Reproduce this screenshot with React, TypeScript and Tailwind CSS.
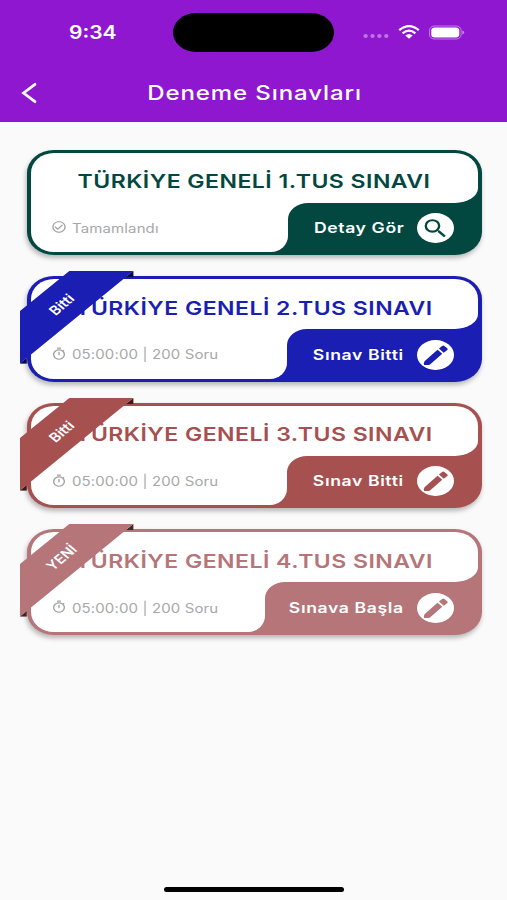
import { MdCheckCircleOutline, MdOutlineTimer, MdSearch } from "react-icons/md";

interface Exam {
  id: number;
  title: string;
  status: string;
  done?: boolean;
  action: string;
  ribbon?: string;
  bg: string;
  text: string;
  tabWidth: string;
}

const exams: Exam[] = [
  {
    id: 1,
    title: "TÜRKİYE GENELİ 1.TUS SINAVI",
    status: "Tamamlandı",
    done: true,
    action: "Detay Gör",
    bg: "bg-[#024840]",
    text: "text-[#024840]",
    tabWidth: "w-[190px]",
  },
  {
    id: 2,
    title: "TÜRKİYE GENELİ 2.TUS SINAVI",
    status: "05:00:00 | 200 Soru",
    action: "Sınav Bitti",
    ribbon: "Bitti",
    bg: "bg-[#1a1eb3]",
    text: "text-[#1a1eb3]",
    tabWidth: "w-[191px]",
  },
  {
    id: 3,
    title: "TÜRKİYE GENELİ 3.TUS SINAVI",
    status: "05:00:00 | 200 Soru",
    action: "Sınav Bitti",
    ribbon: "Bitti",
    bg: "bg-[#a65050]",
    text: "text-[#a65050]",
    tabWidth: "w-[191px]",
  },
  {
    id: 4,
    title: "TÜRKİYE GENELİ 4.TUS SINAVI",
    status: "05:00:00 | 200 Soru",
    action: "Sınava Başla",
    ribbon: "YENİ",
    bg: "bg-[#b57579]",
    text: "text-[#b57579]",
    tabWidth: "w-[213px]",
  },
];

function Ribbon({ label, color }: { label: string; color: string }) {
  return (
    <div className={`absolute -left-[6.7px] -top-[5.3px] h-[93px] w-[114px] ${color}`}>
      <svg viewBox="0 0 114 93" className="h-full w-full">
        <path d="M106 6 L113.3 0 V6 Z M0 92.5 L6.7 87 V92.5 Z" fill="currentColor" />
        <path d="M106 6 L113.3 0 V6 Z M0 92.5 L6.7 87 V92.5 Z" fill="#000" fillOpacity="0.65" />
        <path d="M49.3 0 H113.3 L0 92.5 V40 Z" fill="currentColor" />
      </svg>
      <span className="absolute left-[12px] top-[24px] w-[60px] text-center text-[12.7px] font-semibold leading-[20px] text-white [transform:scaleX(1.2)_rotate(-45deg)]">
        {label}
      </span>
    </div>
  );
}

function PencilIcon() {
  return (
    <svg viewBox="0 0 36 30" className="h-full w-full">
      <path d="M20.3 9.8 L25 13.8 L13 24.2 Q11.9 25.1 10.4 25.1 H8 Q6.5 25.1 6.6 23.9 L6.7 22.8 Q6.8 21.6 7.8 20.8 Z" fill="currentColor" />
      <path d="M21.7 8.6 L24.9 5.9 Q26 5 27.1 5.9 L30 8.3 Q31 9.2 30 10.1 L26.5 12.8 Z" fill="currentColor" />
    </svg>
  );
}

function ExamCard({ exam }: { exam: Exam }) {
  const StatusIcon = exam.done ? MdCheckCircleOutline : MdOutlineTimer;

  return (
    <div
      className={`relative flex h-[105.6px] flex-col rounded-[27px/23px] px-[4px] py-[3px] shadow-[-1px_3px_5px_rgba(0,0,0,0.28)] ${exam.bg}`}
    >
      <div className="flex h-[50px] items-center justify-center rounded-tl-[23px_20px] rounded-tr-[23px_20px] rounded-br-[23px_15px] bg-white pt-[8px]">
        <h2 className={`scale-x-[1.2] whitespace-nowrap text-[19.2px] font-semibold tracking-[0.4px] ${exam.text}`}>
          {exam.title}
        </h2>
      </div>

      <div className="flex flex-1">
        <div className="flex flex-1 items-center rounded-bl-[23px_20px] rounded-br-[17px_16px] bg-white pl-[20px]">
          <StatusIcon className="h-[14px] w-[16px] text-[#a3a3a3]" preserveAspectRatio="none" />
          <span className="ml-[5px] mt-[2px] origin-left scale-x-[1.17] whitespace-nowrap text-[12.8px] tracking-[0.12px] text-[#a8a8a8]">
            {exam.status}
          </span>
        </div>
        {/* white only behind the tab's rounded corner */}
        <div className={`bg-[linear-gradient(to_right,#fff_30px,transparent_30px)] ${exam.tabWidth}`}>
          <div
            className={`flex h-full items-center justify-end rounded-tl-[20px_16px] rounded-br-[23px_20px] pr-[24px] pt-[1.5px] ${exam.bg}`}
          >
            <span className="origin-right scale-x-[1.2] whitespace-nowrap text-[14.7px] font-semibold tracking-[0.5px] text-white">
              {exam.action}
            </span>
            <div
              className={`ml-[13px] flex h-[30px] w-[36.5px] items-center justify-center rounded-[50%] bg-white ${exam.text}`}
            >
              {exam.done ? (
                <MdSearch className="h-[25px] w-[29px]" preserveAspectRatio="none" />
              ) : (
                <PencilIcon />
              )}
            </div>
          </div>
        </div>
      </div>

      {exam.ribbon && <Ribbon label={exam.ribbon} color={exam.text} />}
    </div>
  );
}

function StatusBar() {
  return (
    <div className="relative flex h-[64px] items-center justify-between pl-[69px] pr-[42px]">
      <span className="origin-left scale-x-[1.17] text-[18px] font-semibold text-white">9:34</span>
      <div className="absolute left-[173.3px] top-[12.7px] h-[39px] w-[161px] rounded-[23px/19.5px] bg-black" />
      <div className="flex items-center text-white">
        <svg viewBox="0 0 26 6" className="mr-[9px] mt-[8px] h-[6px] w-[26px] opacity-40">
          <ellipse cx="2.6" cy="3" rx="2.2" ry="1.9" fill="currentColor" />
          <ellipse cx="9.5" cy="3" rx="2.2" ry="1.9" fill="currentColor" />
          <ellipse cx="16.4" cy="3" rx="2.2" ry="1.9" fill="currentColor" />
          <ellipse cx="23.3" cy="3" rx="2.2" ry="1.9" fill="currentColor" />
        </svg>
        <svg viewBox="0 0 22 14" className="h-[14px] w-[22px]" fill="none" stroke="currentColor">
          <path d="M1.2 5.2 Q11 -3 20.8 5.2" strokeWidth="2.4" />
          <path d="M4.6 8.3 Q11 3 17.4 8.3" strokeWidth="2.2" />
          <path d="M7.3 10.6 Q11 7.6 14.7 10.6 L11 13.7 Z" fill="currentColor" stroke="none" />
        </svg>
        <svg viewBox="0 0 36 15" className="ml-[9px] h-[15px] w-[36px]">
          <rect x="0.6" y="1" width="31.5" height="13" rx="5" ry="4.2" fill="none" stroke="currentColor" strokeOpacity="0.45" />
          <rect x="2.3" y="2.5" width="28" height="10" rx="3.6" ry="3" fill="currentColor" />
          <path d="M33.3 5.5 Q35.2 6 35.2 7.5 Q35.2 9 33.3 9.5 Z" fill="currentColor" fillOpacity="0.5" />
        </svg>
      </div>
    </div>
  );
}

export default function App() {
  return (
    <div className="flex h-[900px] w-[507px] flex-col overflow-hidden bg-[#fafafa] font-['Inter',sans-serif]">
      <header className="h-[122.3px] shrink-0 bg-[#8f17cf]">
        <StatusBar />
        <div className="relative flex h-[58px] items-center justify-center">
          <svg viewBox="0 0 16 22" className="absolute left-[21px] top-[18px] h-[22px] w-[16px]">
            <path d="M14 2.3 L2.5 11 L14 19.7" fill="none" stroke="#fff" strokeWidth="2.7" strokeLinecap="round" />
          </svg>
          <h1 className="scale-x-[1.2] whitespace-nowrap pl-[1px] text-[20px] font-medium tracking-[0.76px] text-white">
            Deneme Sınavları
          </h1>
        </div>
      </header>

      <main className="flex flex-1 flex-col gap-[21px] pl-[27px] pr-[25.5px] pt-[27.4px]">
        {exams.map((exam) => (
          <ExamCard key={exam.id} exam={exam} />
        ))}
      </main>

      <div className="mx-auto mb-[8px] h-[5.5px] w-[180px] rounded-full bg-black" />
    </div>
  );
}
